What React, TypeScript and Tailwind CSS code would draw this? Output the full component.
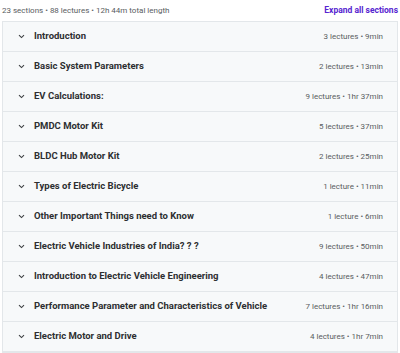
import React from "react";

const sections = [
  { title: "Introduction", meta: "3 lectures • 9min" },
  { title: "Basic System Parameters", meta: "2 lectures • 13min" },
  { title: "EV Calculations:", meta: "9 lectures • 1hr 37min" },
  { title: "PMDC Motor Kit", meta: "5 lectures • 37min" },
  { title: "BLDC Hub Motor Kit", meta: "2 lectures • 25min" },
  { title: "Types of Electric Bicycle", meta: "1 lecture • 11min" },
  { title: "Other Important Things need to Know", meta: "1 lecture • 6min" },
  { title: "Electric Vehicle Industries of India? ? ?", meta: "9 lectures • 50min" },
  { title: "Introduction to Electric Vehicle Engineering", meta: "4 lectures • 47min" },
  { title: "Performance Parameter and Characteristics of Vehicle", meta: "7 lectures • 1hr 16min" },
  { title: "Electric Motor and Drive", meta: "4 lectures • 1hr 7min" },
];

const Chevron = () => (
  <svg width="7" height="5" viewBox="0 0 7 5" className="shrink-0">
    <path d="M1 1.2 L3.5 3.6 L6 1.2" fill="none" stroke="#3e4143" strokeWidth="1.1" />
  </svg>
);

export default function App() {
  return (
    <div
      className="w-[400px] h-[353px] overflow-hidden bg-white pl-[2px] pr-[2px] text-[#2d2f31]"
      style={{ fontFamily: "Roboto, 'Liberation Sans', sans-serif" }}
    >
      <div className="flex items-center justify-between h-[21px]">
        <span className="text-[8px] text-[#595d61]">
          23 sections • 88 lectures • 12h 44m total length
        </span>
        <button className="text-[8.5px] font-bold text-[#5624d0]">Expand all sections</button>
      </div>
      <div className="border border-[#e3e7ea]">
        {sections.map((s, i) => (
          <div
            key={i}
            className="flex items-center h-[30px] bg-[#f7f9fa] border-b border-[#e3e7ea] pl-[15px] pr-[14px]"
          >
            <Chevron />
            <span className="ml-[9px] text-[9.5px] font-bold flex-1 whitespace-nowrap">{s.title}</span>
            <span className="text-[8px] text-[#595d61] whitespace-nowrap">{s.meta}</span>
          </div>
        ))}
      </div>
    </div>
  );
}
